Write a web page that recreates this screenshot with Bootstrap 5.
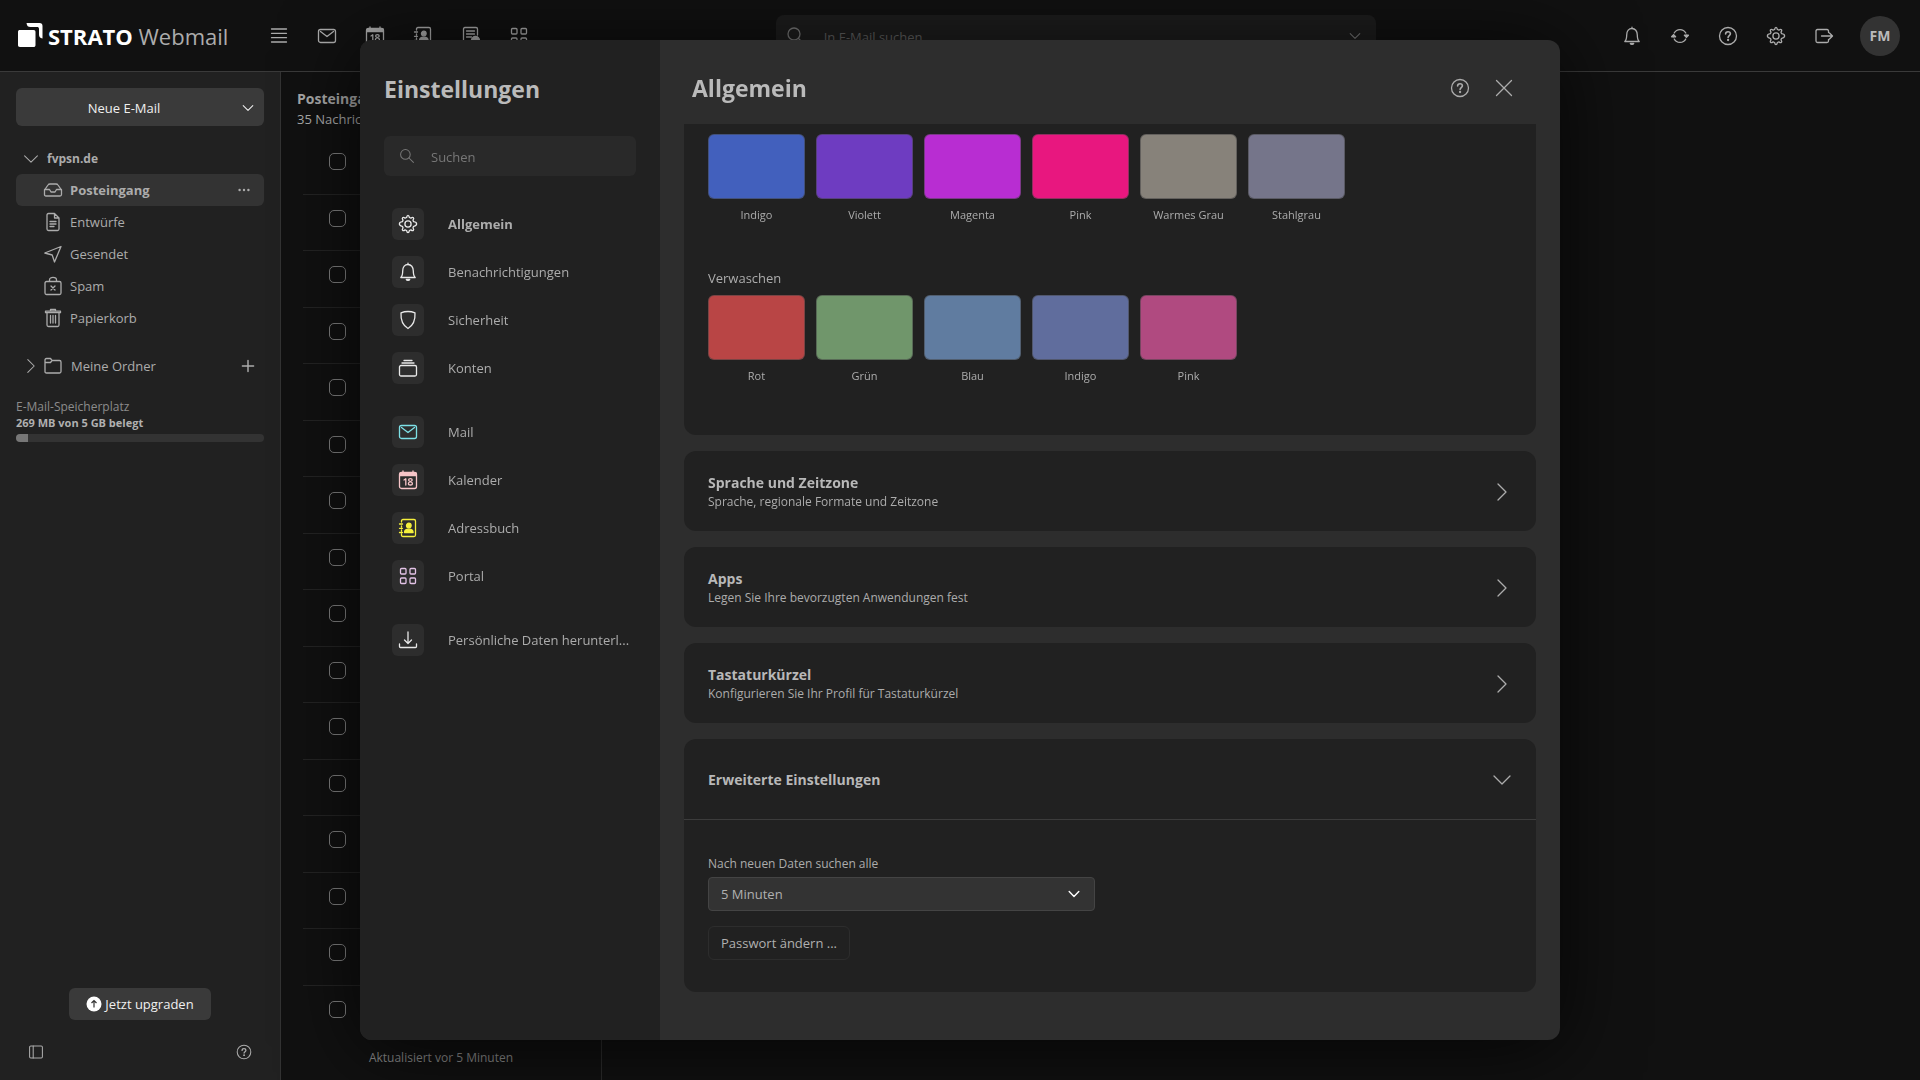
<!DOCTYPE html>
<html lang="de" data-bs-theme="dark">
<head>
<meta charset="utf-8">
<meta name="viewport" content="width=device-width, initial-scale=1">
<title>STRATO Webmail</title>
<link href="https://cdn.jsdelivr.net/npm/bootstrap@5.3.0/dist/css/bootstrap.min.css" rel="stylesheet">
<style>
  body { font-family: "Open Sans", "Noto Sans", sans-serif; font-size: 13px; line-height: 20px; color: #acacac; background: #111; }
  h1, h2, h3, p { margin: 0; }
  a { color: inherit; text-decoration: none; }
  button { color: inherit; }
  .ico { width: 20px; height: 20px; flex: none; fill: none; stroke: currentColor; stroke-width: 1.3; stroke-linejoin: round; stroke-linecap: round; }
  .ico-sm { width: 16px; height: 16px; }
  .icon-button { padding: 0; border: 0; background: none; line-height: 0; }

  /* top bar */
  .topbar { height: 72px; border-bottom: 1px solid #3a3a3a; padding: 0 20px 0 17px; }
  .brand-name { font-size: 22px; line-height: 32px; }
  .brand-name b { color: #fff; font-weight: 700; }
  .app-icons { gap: 28px; }
  .app-launcher { margin-left: 41px; }
  .mail-search { width: 600px; height: 42px; background: #1d1d1d; border-radius: 8px; padding: 0 13px 0 10px; gap: 18px; color: #777; }
  .mail-search .form-control, .settings-search .form-control { background: none; border: 0; padding: 2px 0 0; font-size: 13px; line-height: 20px; color: #777; box-shadow: none; }
  .mail-search .form-control::placeholder, .settings-search .form-control::placeholder { color: inherit; }
  .mail-search .form-control { color: #606060; }
  .user-badge { width: 40px; height: 40px; margin-left: -2px; border-radius: 50%; background: #333; color: #bababa; font-weight: 700; font-size: 14px; }

  /* folder column */
  .folders { width: 281px; background: #212121; border-right: 1px solid #333; padding: 16px; }
  .compose { height: 38px; background: #3a3a3a; border: 0; border-radius: 6px; color: #f0f0f0; padding: 2px 8px 0 0; gap: 8px; font-size: 13px; }
  .account { height: 31px; margin-top: 17px; padding-left: 7px; font-size: 12px; font-weight: 700; }
  .folder-row { height: 32px; padding: 0 8px 0 27px; border-radius: 6px; gap: 7px; }
  .folder-row.active { background: #333; font-weight: 700; padding-right: 12px; }
  .own-folders { height: 32px; margin-top: 16px; padding: 0 8px 0 7px; }
  .quota { font-size: 12px; line-height: 16px; margin-top: 17px; color: #8c8c8c; }
  .quota b { display: block; font-size: 11px; color: #b0b0b0; }
  .quota .progress { height: 8px; background: #333; margin-top: 3px; border-radius: 4px; }
  .quota .progress-bar { background: #777; }
  .upgrade { height: 32px; width: 142px; background: #3a3a3a; border: 0; border-radius: 6px; color: #f0f0f0; gap: 3px; font-size: 13px; }

  /* message list */
  .messages { width: 321px; border-right: 1px solid #2c2c2c; border-top-left-radius: 8px; background: #111; }
  .list-title { padding: 17px 16px 9px; }
  .list-title h2 { font-size: 14px; line-height: 20px; font-weight: 700; color: #a8a8a8; }
  .message-rows { margin: 0 16px 0 22px; padding: 0; list-style: none; }
  .message-rows li { border-bottom: 1px solid #242424; padding: 15px 0 0 26px; line-height: 0; }
  .message-rows li:last-child { border: 0; }
  .message-rows .form-check-input { width: 17px; height: 17px; margin: 0; border: 1px solid #808080; border-radius: 5px; background: none; }
  .list-status { height: 39px; color: #8c8c8c; font-size: 12px; padding-top: 7px; }

  /* settings dialog */
  .settings-dialog { max-width: 1200px; height: calc(100vh - 80px); margin: 40px auto; }
  .settings-box { height: 100%; background: #2d2d2d; border: 0; border-radius: 12px; overflow: hidden; box-shadow: 0 8px 80px rgba(0, 0, 0, .75); }
  .settings-side { width: 300px; background: #212121; padding: 31px 24px; color: #acacac; }
  .settings-side h1, .settings-main h1 { font-size: 23px; line-height: 36px; font-weight: 700; color: #bababa; }
  .settings-search { height: 40px; margin-top: 29px; background: #292929; border-radius: 6px; padding: 0 15px; gap: 16px; color: #777; }
  .settings-nav { margin-top: 32px; padding: 0 0 0 8px; gap: 16px; }
  .settings-nav a { gap: 24px; height: 32px; white-space: nowrap; }
  .settings-nav .tile { width: 32px; height: 32px; border-radius: 6px; background: #2d2d2d; color: #e8e8e8; flex: none; }
  .settings-nav .group-end { margin-bottom: 16px; }
  .settings-main { padding: 0 24px; color: #acacac; }
  .settings-head { height: 84px; padding: 12px 22px 0 8px; gap: 24px; flex: none; }
  .settings-scroll { overflow: hidden; gap: 16px; }
  .panel { background: #212121; border-radius: 12px; flex: none; }
  .theme-panel { padding: 10px 24px 51px; border-radius: 0 0 12px 12px; }
  .swatches { gap: 11px; }
  .swatch { width: 97px; padding: 0; border: 0; background: none; text-align: center; font-size: 11px; line-height: 16px; }
  .swatch .tone { display: block; height: 65px; border-radius: 6px; margin-bottom: 8px; border: 1px solid #4448; }
  .swatch-title { font-size: 13px; line-height: 20px; margin: 45px 0 7px; color: #acacac; }
  .panel-row { height: 80px; width: 100%; padding: 2px 24px 0; border: 0; background: none; text-align: left; }
  .panel-row h3 { font-size: 14px; line-height: 20px; font-weight: 700; color: #b8b8b8; }
  .panel-row p { font-size: 12px; line-height: 18px; }
  .panel-body { border-top: 1px solid #3c3c3c; padding: 34px 24px 32px; }
  .panel-body label { display: block; font-size: 12px; line-height: 20px; margin-bottom: 3px; }
  .interval { width: 387px; max-width: 100%; position: relative; }
  .interval .form-select { height: 34px; font-size: 13px; line-height: 20px; padding: 0 12px; background: #333; border: 1px solid #444; border-radius: 4px; color: #b0b0b0; }
  .interval .ico { position: absolute; right: 13px; top: 9px; color: #fff; stroke-width: 1.8; pointer-events: none; }
  .change-password { height: 34px; margin-top: 15px; padding: 0 12px; font-size: 13px; background: none; border: 1px solid #2d2d2d; border-radius: 6px; color: #b0b0b0; }
</style>
<script src="https://cdn.jsdelivr.net/npm/bootstrap@5.3.0/dist/js/bootstrap.bundle.min.js"></script>
</head>
<body class="vh-100 overflow-hidden d-flex flex-column">

<svg class="d-none" aria-hidden="true">
  <symbol id="i-menu" viewBox="0 0 20 20"><path d="M2.500 4h15M2.500 8.300h15M2.500 12.700h15M2.500 17h15"/></symbol>
  <symbol id="i-mail" viewBox="0 0 20 20"><rect x="1.500" y="3.500" width="17" height="13" rx="2"/><path d="m3.500 5.500 6.500 5 6.500-5"/></symbol>
  <symbol id="i-calendar" viewBox="0 0 20 20"><rect x="1.500" y="2.500" width="17" height="16" rx="2"/><path d="M2 3h16v2.500H2zM5 1v2M15 1v2" fill="currentColor"/><path d="m6 10 1.800-1.200V15M12.400 11.600c-1.200-.300-1.800-.800-1.800-1.500s.700-1.400 1.800-1.400 1.800.700 1.800 1.400-.600 1.200-1.800 1.500c-1.300.300-2 .900-2 1.800s.800 1.600 2 1.600 2-.700 2-1.600-.700-1.500-2-1.800z"/></symbol>
  <symbol id="i-contacts" viewBox="0 0 20 20"><path d="M3.500 4V3c0-1 .500-1.500 1.500-1.500h11c1 0 1.500.500 1.500 1.500v14c0 1-.500 1.500-1.500 1.500H5c-1 0-1.500-.500-1.500-1.500v-1M3.500 8v1M3.500 12v1M1.500 6h3M1.500 10.300h3M1.500 14.500h3"/><circle cx="10.800" cy="7.500" r="2.300" fill="currentColor"/><path d="M6.500 14.500c0-2.600 1.800-3.300 4.300-3.300s4.300.700 4.300 3.300z" fill="currentColor"/></symbol>
  <symbol id="i-tasks" viewBox="0 0 20 20"><path d="M10 18.500H4c-1 0-1.500-.500-1.500-1.500V3c0-1 .500-1.500 1.500-1.500h11c1 0 1.500.500 1.500 1.500v6M5.500 5h8M5.500 8h8M5.500 11h5"/><circle cx="14.500" cy="14.500" r="4" fill="currentColor"/></symbol>
  <symbol id="i-portal" viewBox="0 0 20 20"><rect x="2.500" y="2.500" width="5.500" height="5.500" rx="1"/><rect x="12" y="2.500" width="5.500" height="5.500" rx="1"/><rect x="2.500" y="12" width="5.500" height="5.500" rx="1"/><rect x="12" y="12" width="5.500" height="5.500" rx="1"/></symbol>
  <symbol id="i-search" viewBox="0 0 20 20"><circle cx="8" cy="8" r="6"/><path d="m12.500 12.500 5.500 5.500"/></symbol>
  <symbol id="i-down" viewBox="0 0 20 20"><path d="m4 7 6 6 6-6"/></symbol>
  <symbol id="i-down-wide" viewBox="0 0 20 20"><path d="m2 6 8 8 8-8"/></symbol>
  <symbol id="i-right" viewBox="0 0 20 20"><path d="m6 2 8 8-8 8"/></symbol>
  <symbol id="i-bell" viewBox="0 0 20 20"><path d="M10 1.200v1.300M2.800 15.500c1.500-1.300 1.900-3 1.900-6.500 0-4 2.200-6.500 5.300-6.500s5.300 2.500 5.300 6.500c0 3.500.400 5.200 1.900 6.500z"/><path d="M8.300 17.500h3.400c-.500 1.200-2.900 1.200-3.400 0z" fill="currentColor"/></symbol>
  <symbol id="i-refresh" viewBox="0 0 20 20"><path d="M4.200 7a6.600 6.600 0 0 1 11.600 0M15.800 13a6.600 6.600 0 0 1-11.600 0M3.400 10.800V9.500M16.600 9.200v1.300"/><path d="m1.600 10.800 2-2.200 2 2.200zM18.400 9.200l-2 2.200-2-2.200z" fill="currentColor"/></symbol>
  <symbol id="i-help" viewBox="0 0 20 20"><circle cx="10" cy="10" r="8.500"/><path d="M7.600 8c0-1.400 1-2.300 2.400-2.300s2.400.9 2.400 2.100c0 1.700-2.300 1.800-2.300 3.600" stroke-width="1.600"/><circle cx="10.100" cy="14" r=".5" fill="currentColor"/></symbol>
  <symbol id="i-gear" viewBox="0 0 20 20"><circle cx="10" cy="10" r="3.100"/><path d="M8.600 3.500C8.900 2 9.100 1.400 10 1.400s1.100.6 1.400 2.100l1.500.6c1.300-.9 1.900-1 2.500-.4s.5 1.200-.4 2.500l.6 1.500c1.600.3 3 .5 3 2.300s-1.400 2-3 2.300l-.6 1.500c.9 1.300 1 1.900.4 2.500s-1.200.5-2.500-.4l-1.500.6c-.3 1.500-.5 2.100-1.400 2.100s-1.100-.6-1.400-2.100l-1.500-.6c-1.300.9-1.900 1-2.500.4s-.5-1.200.4-2.500l-.6-1.500c-1.600-.3-3-.5-3-2.300s1.400-2 3-2.300L5 6.200c-.9-1.300-1-1.900-.4-2.500s1.200-.5 2.500.4z"/></symbol>
  <symbol id="i-logout" viewBox="0 0 20 20"><path d="M14.500 6.500V5c0-1-.5-1.500-1.500-1.500H3.500C2.500 3.500 2 4 2 5v10c0 1 .5 1.500 1.500 1.500H13c1 0 1.500-.5 1.500-1.500v-1.500M7.500 10h10M15.500 7l3 3-3 3"/></symbol>
  <symbol id="i-close" viewBox="0 0 20 20"><path d="m2.500 2.500 15 15M17.500 2.500l-15 15"/></symbol>
  <symbol id="i-inbox" viewBox="0 0 20 20"><path d="M1.500 10 5 5c.5-.8 1-1 2-1h6c1 0 1.500.2 2 1l3.500 5v4.500c0 1-.5 1.500-1.500 1.500H3c-1 0-1.500-.5-1.500-1.500zM1.500 9.500h5l1.500 2.500h4l1.500-2.500h5"/></symbol>
  <symbol id="i-draft" viewBox="0 0 20 20"><path d="M11.500 1.500h-6C4.500 1.500 4 2 4 3v14c0 1 .5 1.500 1.500 1.500h9c1 0 1.500-.5 1.500-1.500V6zM11.500 1.500V6H16M7 9.500h6M7 12h6M7 14.500h4"/></symbol>
  <symbol id="i-sent" viewBox="0 0 20 20"><path d="M18 2.500 1.800 9l7.400 2 2.300 7z"/></symbol>
  <symbol id="i-spam" viewBox="0 0 20 20"><rect x="2" y="5.500" width="16" height="13" rx="1.500"/><path d="M6.500 5V4c0-3.500 7-3.500 7 0v1M8 10l4 4M12 10l-4 4"/></symbol>
  <symbol id="i-trash" viewBox="0 0 20 20"><path d="M2.500 3.200h15v1.500h-15zM7.500 3V1.500h5V3M4 5v12c0 1 .5 1.500 1.500 1.500h9c1 0 1.500-.5 1.500-1.500V5M7.500 7.500V15M10 7.500V15M12.500 7.500V15"/></symbol>
  <symbol id="i-folder" viewBox="0 0 20 20"><path d="M2 16V4c0-1 .5-1.500 1.500-1.500h4L9 4.500h7.500c1 0 1.500.5 1.500 1.500v9.500c0 1-.5 1.500-1.500 1.500h-13C2.500 17 2 16.500 2 15.500zM2 6.500h5.500l1.500-2"/></symbol>
  <symbol id="i-plus" viewBox="0 0 20 20"><path d="M10 3v14M3 10h14" stroke-width="1.800"/></symbol>
  <symbol id="i-shield" viewBox="0 0 20 20"><path d="M10 1.500c2.500 0 5 .5 7 1.300.4 7-1.500 12.500-7 15.700C4.500 15.300 2.600 9.800 3 2.800c2-.8 4.500-1.300 7-1.300z"/></symbol>
  <symbol id="i-accounts" viewBox="0 0 20 20"><rect x="1.500" y="7.500" width="17" height="10.500" rx="1.500"/><path d="M4 5h12M6 2.500h8"/></symbol>
  <symbol id="i-download" viewBox="0 0 20 20"><path d="M10 2v11M6.500 10l3.500 3.500 3.500-3.500M1.500 14v2.500c0 .7.300 1 1 1h15c.7 0 1-.3 1-1V14"/></symbol>
  <symbol id="i-dots" viewBox="0 0 20 20"><g fill="currentColor" stroke="none"><circle cx="4.500" cy="10" r="1.500"/><circle cx="10" cy="10" r="1.500"/><circle cx="15.500" cy="10" r="1.500"/></g></symbol>
  <symbol id="i-columns" viewBox="0 0 20 20"><rect x="2" y="2.500" width="16" height="15" rx="1.500"/><path d="M6.500 2.500v15"/></symbol>
</svg>

<header class="topbar d-flex align-items-center justify-content-between flex-shrink-0">
  <div class="d-flex align-items-center">
    <a href="#" class="d-flex align-items-center gap-1">
      <svg width="27" height="28" viewBox="0 0 27 28"><path fill="#fff" d="M3 8h13.500c1.500 0 2 .7 2 2v13c0 1.500-.7 2-2 2H3c-1.500 0-2-.7-2-2V10c0-1.500.7-2 2-2zM9.500 1h13c2 0 3 1 3 3v12.500c-2.500-.5-3.500-1.500-3.500-4V7c0-1.500-.7-2-2-2h-6.500c-2.500 0-3.500-1-4-4z"/></svg>
      <span class="brand-name"><b>STRATO</b> Webmail</span>
    </a>
    <nav class="app-icons app-launcher d-flex" aria-label="Apps">
      <button class="icon-button" aria-label="Menü"><svg class="ico"><use href="#i-menu"/></svg></button>
      <a href="#" aria-label="Mail"><svg class="ico"><use href="#i-mail"/></svg></a>
      <a href="#" aria-label="Kalender"><svg class="ico"><use href="#i-calendar"/></svg></a>
      <a href="#" aria-label="Adressbuch"><svg class="ico"><use href="#i-contacts"/></svg></a>
      <a href="#" aria-label="Aufgaben"><svg class="ico"><use href="#i-tasks"/></svg></a>
      <a href="#" aria-label="Portal"><svg class="ico"><use href="#i-portal"/></svg></a>
    </nav>
  </div>
  <div class="mail-search d-flex align-items-center">
    <svg class="ico"><use href="#i-search"/></svg>
    <input class="form-control" type="search" placeholder="In E-Mail suchen" aria-label="In E-Mail suchen">
    <svg class="ico ico-sm"><use href="#i-down"/></svg>
  </div>
  <div class="app-icons d-flex align-items-center">
    <button class="icon-button" aria-label="Benachrichtigungen"><svg class="ico"><use href="#i-bell"/></svg></button>
    <button class="icon-button" aria-label="Aktualisieren"><svg class="ico"><use href="#i-refresh"/></svg></button>
    <button class="icon-button" aria-label="Hilfe"><svg class="ico"><use href="#i-help"/></svg></button>
    <button class="icon-button" aria-label="Einstellungen"><svg class="ico"><use href="#i-gear"/></svg></button>
    <button class="icon-button" aria-label="Abmelden"><svg class="ico"><use href="#i-logout"/></svg></button>
    <button class="icon-button user-badge">FM</button>
  </div>
</header>

<div class="d-flex flex-grow-1 overflow-hidden">
  <aside class="folders d-flex flex-column flex-shrink-0">
    <button class="compose d-flex align-items-center"><span class="flex-grow-1 text-center">Neue E-Mail</span><svg class="ico ico-sm"><use href="#i-down"/></svg></button>
    <div class="account d-flex align-items-center gap-2"><svg class="ico ico-sm"><use href="#i-down-wide"/></svg>fvpsn.de</div>
    <nav aria-label="Ordner">
      <a href="#" class="folder-row active d-flex align-items-center"><svg class="ico"><use href="#i-inbox"/></svg>Posteingang<svg class="ico ico-sm ms-auto"><use href="#i-dots"/></svg></a>
      <a href="#" class="folder-row d-flex align-items-center"><svg class="ico"><use href="#i-draft"/></svg>Entwürfe</a>
      <a href="#" class="folder-row d-flex align-items-center"><svg class="ico"><use href="#i-sent"/></svg>Gesendet</a>
      <a href="#" class="folder-row d-flex align-items-center"><svg class="ico"><use href="#i-spam"/></svg>Spam</a>
      <a href="#" class="folder-row d-flex align-items-center"><svg class="ico"><use href="#i-trash"/></svg>Papierkorb</a>
      <a href="#" class="own-folders d-flex align-items-center"><svg class="ico ico-sm me-1"><use href="#i-right"/></svg><svg class="ico me-2"><use href="#i-folder"/></svg>Meine Ordner<svg class="ico ico-sm ms-auto"><use href="#i-plus"/></svg></a>
    </nav>
    <div class="quota">E-Mail-Speicherplatz<b>269 MB von 5 GB belegt</b>
      <div class="progress" role="progressbar" aria-label="Speicherplatz" aria-valuenow="5" aria-valuemin="0" aria-valuemax="100"><div class="progress-bar" style="width:5%"></div></div>
    </div>
    <div class="mt-auto d-flex justify-content-center mb-4">
      <button class="upgrade d-flex align-items-center justify-content-center"><svg width="16" height="16" viewBox="0 0 16 16"><circle cx="8" cy="8" r="7.500" fill="#fff"/><path d="M8 11.500v-7M5.500 7 8 4.500 10.500 7" fill="none" stroke="#333" stroke-width="1.200"/></svg>Jetzt upgraden</button>
    </div>
    <div class="d-flex justify-content-between px-2 pb-1">
      <button class="icon-button ms-1" aria-label="Ordneransicht"><svg class="ico ico-sm"><use href="#i-columns"/></svg></button>
      <button class="icon-button me-1" aria-label="Hilfe"><svg class="ico ico-sm"><use href="#i-help"/></svg></button>
    </div>
  </aside>

  <main class="messages d-flex flex-column flex-shrink-0">
    <div class="list-title"><h2>Posteingang</h2>35 Nachrichten</div>
    <ul class="message-rows flex-grow-1 d-flex flex-column">
      <li class="flex-fill"><input class="form-check-input" type="checkbox" aria-label="Nachricht auswählen"></li>
      <li class="flex-fill"><input class="form-check-input" type="checkbox" aria-label="Nachricht auswählen"></li>
      <li class="flex-fill"><input class="form-check-input" type="checkbox" aria-label="Nachricht auswählen"></li>
      <li class="flex-fill"><input class="form-check-input" type="checkbox" aria-label="Nachricht auswählen"></li>
      <li class="flex-fill"><input class="form-check-input" type="checkbox" aria-label="Nachricht auswählen"></li>
      <li class="flex-fill"><input class="form-check-input" type="checkbox" aria-label="Nachricht auswählen"></li>
      <li class="flex-fill"><input class="form-check-input" type="checkbox" aria-label="Nachricht auswählen"></li>
      <li class="flex-fill"><input class="form-check-input" type="checkbox" aria-label="Nachricht auswählen"></li>
      <li class="flex-fill"><input class="form-check-input" type="checkbox" aria-label="Nachricht auswählen"></li>
      <li class="flex-fill"><input class="form-check-input" type="checkbox" aria-label="Nachricht auswählen"></li>
      <li class="flex-fill"><input class="form-check-input" type="checkbox" aria-label="Nachricht auswählen"></li>
      <li class="flex-fill"><input class="form-check-input" type="checkbox" aria-label="Nachricht auswählen"></li>
      <li class="flex-fill"><input class="form-check-input" type="checkbox" aria-label="Nachricht auswählen"></li>
      <li class="flex-fill"><input class="form-check-input" type="checkbox" aria-label="Nachricht auswählen"></li>
      <li class="flex-fill"><input class="form-check-input" type="checkbox" aria-label="Nachricht auswählen"></li>
      <li class="flex-fill"><input class="form-check-input" type="checkbox" aria-label="Nachricht auswählen"></li>
    </ul>
    <div class="list-status text-center">Aktualisiert vor 5 Minuten</div>
  </main>
</div>

<div class="modal d-block" role="dialog" aria-modal="true" aria-labelledby="settings-title">
  <div class="modal-dialog settings-dialog">
    <div class="modal-content settings-box flex-row">
      <div class="settings-side flex-shrink-0">
        <h1 id="settings-title">Einstellungen</h1>
        <div class="settings-search d-flex align-items-center">
          <svg class="ico ico-sm"><use href="#i-search"/></svg>
          <input class="form-control" type="search" placeholder="Suchen" aria-label="Suchen">
        </div>
        <nav class="settings-nav d-flex flex-column" aria-label="Einstellungen">
          <a href="#" class="d-flex align-items-center fw-bold"><span class="tile d-flex align-items-center justify-content-center"><svg class="ico"><use href="#i-gear"/></svg></span>Allgemein</a>
          <a href="#" class="d-flex align-items-center"><span class="tile d-flex align-items-center justify-content-center"><svg class="ico"><use href="#i-bell"/></svg></span>Benachrichtigungen</a>
          <a href="#" class="d-flex align-items-center"><span class="tile d-flex align-items-center justify-content-center"><svg class="ico"><use href="#i-shield"/></svg></span>Sicherheit</a>
          <a href="#" class="d-flex align-items-center group-end"><span class="tile d-flex align-items-center justify-content-center"><svg class="ico"><use href="#i-accounts"/></svg></span>Konten</a>
          <a href="#" class="d-flex align-items-center"><span class="tile d-flex align-items-center justify-content-center"><svg class="ico" color="#7de0e6"><use href="#i-mail"/></svg></span>Mail</a>
          <a href="#" class="d-flex align-items-center"><span class="tile d-flex align-items-center justify-content-center"><svg class="ico" color="#f7c5c8"><use href="#i-calendar"/></svg></span>Kalender</a>
          <a href="#" class="d-flex align-items-center"><span class="tile d-flex align-items-center justify-content-center"><svg class="ico" color="#f5f03c"><use href="#i-contacts"/></svg></span>Adressbuch</a>
          <a href="#" class="d-flex align-items-center group-end"><span class="tile d-flex align-items-center justify-content-center"><svg class="ico" color="#e3c3e6"><use href="#i-portal"/></svg></span>Portal</a>
          <a href="#" class="d-flex align-items-center"><span class="tile d-flex align-items-center justify-content-center"><svg class="ico"><use href="#i-download"/></svg></span>Persönliche Daten herunterl...</a>
        </nav>
      </div>
      <div class="settings-main flex-grow-1 d-flex flex-column">
        <div class="settings-head d-flex align-items-center">
          <h1 class="me-auto">Allgemein</h1>
          <button class="icon-button" aria-label="Hilfe"><svg class="ico"><use href="#i-help"/></svg></button>
          <button class="icon-button" aria-label="Schließen"><svg class="ico"><use href="#i-close"/></svg></button>
        </div>
        <div class="settings-scroll flex-grow-1 d-flex flex-column">
          <section class="panel theme-panel">
            <div class="swatches d-flex">
              <button class="swatch"><span class="tone" style="background:#4260bd"></span>Indigo</button>
              <button class="swatch"><span class="tone" style="background:#6e3cc1"></span>Violett</button>
              <button class="swatch"><span class="tone" style="background:#b82dd2"></span>Magenta</button>
              <button class="swatch"><span class="tone" style="background:#e8177f"></span>Pink</button>
              <button class="swatch"><span class="tone" style="background:#87827a"></span>Warmes Grau</button>
              <button class="swatch"><span class="tone" style="background:#75758a"></span>Stahlgrau</button>
            </div>
            <h2 class="swatch-title">Verwaschen</h2>
            <div class="swatches d-flex">
              <button class="swatch"><span class="tone" style="background:#b94545"></span>Rot</button>
              <button class="swatch"><span class="tone" style="background:#70966b"></span>Grün</button>
              <button class="swatch"><span class="tone" style="background:#607ca0"></span>Blau</button>
              <button class="swatch"><span class="tone" style="background:#606d9d"></span>Indigo</button>
              <button class="swatch"><span class="tone" style="background:#b04a80"></span>Pink</button>
            </div>
          </section>
          <section class="panel"><button class="panel-row d-flex align-items-center justify-content-between"><span><h3>Sprache und Zeitzone</h3><p>Sprache, regionale Formate und Zeitzone</p></span><svg class="ico"><use href="#i-right"/></svg></button></section>
          <section class="panel"><button class="panel-row d-flex align-items-center justify-content-between"><span><h3>Apps</h3><p>Legen Sie Ihre bevorzugten Anwendungen fest</p></span><svg class="ico"><use href="#i-right"/></svg></button></section>
          <section class="panel"><button class="panel-row d-flex align-items-center justify-content-between"><span><h3>Tastaturkürzel</h3><p>Konfigurieren Sie Ihr Profil für Tastaturkürzel</p></span><svg class="ico"><use href="#i-right"/></svg></button></section>
          <section class="panel">
            <button class="panel-row d-flex align-items-center justify-content-between" aria-expanded="true"><h3>Erweiterte Einstellungen</h3><svg class="ico"><use href="#i-down-wide"/></svg></button>
            <div class="panel-body">
              <label for="interval">Nach neuen Daten suchen alle</label>
              <div class="interval">
                <select class="form-select" id="interval"><option>5 Minuten</option><option>10 Minuten</option><option>15 Minuten</option></select>
                <svg class="ico ico-sm"><use href="#i-down"/></svg>
              </div>
              <button class="change-password">Passwort ändern ...</button>
            </div>
          </section>
        </div>
      </div>
    </div>
  </div>
</div>
</body>
</html>
